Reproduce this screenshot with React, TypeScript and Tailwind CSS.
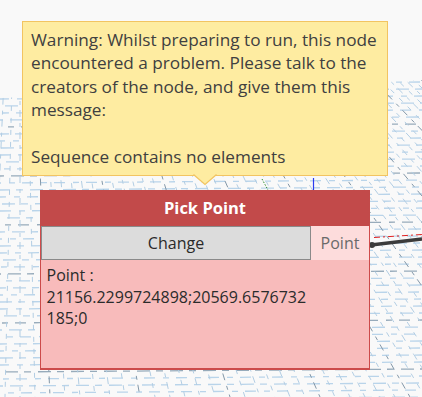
import React from "react";

function Grid() {
  const hLines = Array.from({ length: 48 }, (_, i) => 78 + i * 7);
  const rLines = Array.from({ length: 90 }, (_, i) => -400 + i * 15);
  const vx = 20;
  const vy = -285;
  return (
    <svg className="absolute inset-0" width={422} height={397} viewBox="0 0 422 397">
      <defs>
        <clipPath id="plane">
          <polygon points="0,98 422,80 422,397 0,397" />
        </clipPath>
      </defs>
      <g clipPath="url(#plane)">
        {hLines.map((y, i) => (
          <line
            key={"h" + i}
            x1={0}
            y1={y}
            x2={422}
            y2={y - 3}
            stroke={i % 7 === 0 ? "#97abbb" : "#b9d4ea"}
            strokeWidth={1.3}
            strokeDasharray={i % 2 ? "11 8 6 7" : "7 7 13 6"}
            strokeDashoffset={(i * 7) % 19}
          />
        ))}
        {rLines.map((xb, i) => (
          <line
            key={"r" + i}
            x1={vx}
            y1={vy}
            x2={xb}
            y2={397}
            stroke={i % 6 === 0 ? "#8397a8" : "#b2cde3"}
            strokeWidth={1}
            strokeDasharray={i % 2 ? "5 7" : "4 5 7 6"}
            strokeDashoffset={(i * 5) % 13}
          />
        ))}
      </g>
      {/* axis lines */}
      <line x1={262} y1={179} x2={268} y2={190} stroke="#2e8b2e" strokeWidth={1} strokeDasharray="1.5 1.5" />
      <line x1={313.5} y1={178} x2={313.5} y2={190} stroke="#2a3cf0" strokeWidth={1.2} />
      {/* wire */}
      <line x1={374} y1={237.5} x2={422} y2={234.5} stroke="#e02020" strokeWidth={1} strokeDasharray="6 3 2 3" />
      <path d="M371 245 L422 239" stroke="#3b3b3b" strokeWidth={3.5} fill="none" />
      <circle cx={372} cy={245} r={3} fill="#3b3b3b" />
    </svg>
  );
}

export default function App() {
  return (
    <div
      className="relative w-[422px] h-[397px] overflow-hidden bg-[#f9f9f9]"
      style={{ fontFamily: '"Open Sans", "Noto Sans", sans-serif' }}
    >
      <Grid />
      <div className="relative flex flex-col items-start pl-[22px] pt-[21px]">
        <div className="relative w-[366px] h-[155px] border border-[#f2c462] bg-[#feeca1] pl-[8px] pt-[5.5px] text-[17.2px] leading-[23.5px] text-[#404040]">
          <div className="whitespace-nowrap">Warning: Whilst preparing to run, this node</div>
          <div className="whitespace-nowrap">encountered a problem. Please talk to the</div>
          <div className="whitespace-nowrap">creators of the node, and give them this</div>
          <div className="whitespace-nowrap">message:</div>
          <div className="h-[23.5px]"></div>
          <div className="whitespace-nowrap">Sequence contains no elements</div>
          <svg className="absolute left-[170px] top-[152px]" width={24} height={12} viewBox="0 0 24 12">
            <polygon points="0,0 24,0 12,10.5" fill="#feeca1" />
            <polyline points="0.5,0.5 12,10.5 23.5,0.5" fill="none" stroke="#f2c462" strokeWidth={1.2} />
          </svg>
        </div>
        <div className="ml-[18px] mt-[14px] flex w-[330px] flex-col">
          <div className="flex h-[36px] items-center justify-center bg-[#c24a4a] text-[16.5px] font-bold text-white">
            Pick Point
          </div>
          <div className="flex h-[34px] border-l-[1.5px] border-r-[1.5px] border-[#d04c4c] bg-[#f8bbbb]">
            <div className="flex w-[270px] items-center justify-center border border-[#8a8a8a] bg-[#dcdcdc] text-[16px] text-[#2a2a2a]">
              Change
            </div>
            <div className="flex flex-1 items-center justify-center bg-[#fddcdc] text-[16px] text-[#6a6a6a]">
              Point
            </div>
          </div>
          <div className="h-[110px] border-l-[1.5px] border-r-[1.5px] border-b-2 border-[#cc4a4a] bg-[#f8bbbb] pl-[5.5px] pt-[5px] text-[16px] leading-[21.5px] text-[#2b2b2b]">
            <div className="whitespace-nowrap">Point :</div>
            <div className="whitespace-nowrap">21156.2299724898;20569.6576732</div>
            <div className="whitespace-nowrap">185;0</div>
          </div>
        </div>
      </div>
    </div>
  );
}
